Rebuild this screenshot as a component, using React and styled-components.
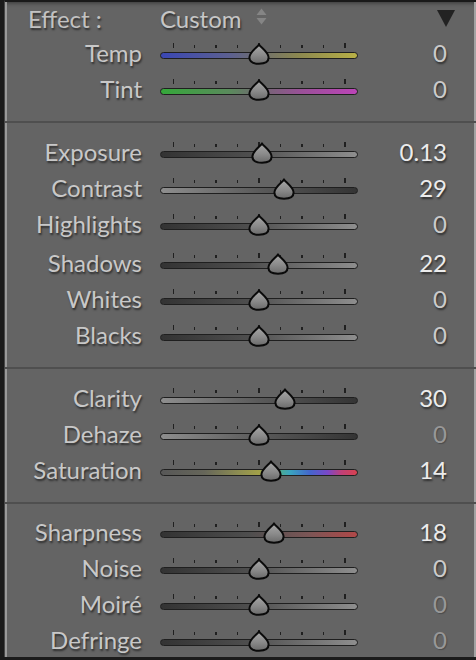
import React from 'react';
import styled, { createGlobalStyle } from 'styled-components';

const GlobalStyle = createGlobalStyle`
  html, body { margin: 0; padding: 0; background: #1b1b1b; }
  body {
    width: 476px; height: 660px; overflow: hidden;
    font-family: Lato, "Open Sans", sans-serif;
  }
`;

const Frame = styled.div`
  width: 476px;
  height: 660px;
  box-sizing: border-box;
  padding-left: 4px;
  padding-bottom: 3px;
  background: #1b1b1b;
  display: flex;
`;

const Panel = styled.div`
  flex: 1;
  box-sizing: border-box;
  overflow: hidden;
  background: #646464;
  border-left: 1px solid #474747;
  border-top: 2px solid #1a1a1a;
  box-shadow: inset 2px 0 0 #9a9a9a, inset -2px 0 0 #a3a3a3,
    inset 0 5px 4px -4px rgba(0, 0, 0, 0.45);
  display: flex;
  flex-direction: column;
`;

const Section = styled.div`
  padding-top: ${(p) => (p.$first ? '0' : '10.5px')};
  padding-bottom: ${(p) => (p.$last ? '0' : '14px')};
  display: flex;
  flex-direction: column;
`;

const Divider = styled.div`
  height: 2px;
  background: #4f4f4f;
  flex: none;
`;

const HeaderRow = styled.div`
  height: 33px;
  display: flex;
  align-items: center;
  flex: none;
`;

const EffectLabel = styled.div`
  width: 155px;
  box-sizing: border-box;
  padding-left: 23px;
  font-size: 24px;
  color: #c2c2c2;
  text-shadow: 1px 2px 2px rgba(0, 0, 0, 0.55);
  white-space: nowrap;
`;

const EffectValue = styled.div`
  font-size: 24px;
  color: #c6c6c6;
  text-shadow: 1px 2px 2px rgba(0, 0, 0, 0.55);
`;

const Stepper = styled.svg`
  margin-left: 14px;
  margin-bottom: 4px;
  flex: none;
`;

const Disclosure = styled.svg`
  margin-left: auto;
  margin-right: 21px;
  flex: none;
`;

const Row = styled.div`
  height: 36px;
  display: flex;
  align-items: stretch;
  flex: none;
  margin-top: ${(p) => p.$extra || 0}px;
`;

const Label = styled.div`
  width: 137px;
  line-height: 36px;
  text-align: right;
  font-size: 24px;
  color: #c8c8c8;
  text-shadow: 1px 2px 2px rgba(0, 0, 0, 0.55);
  white-space: nowrap;
`;

const Slider = styled.div`
  position: relative;
  width: 198px;
  margin-left: 18px;
  box-sizing: border-box;
  padding-top: 8px;
  display: flex;
  flex-direction: column;
  flex: none;
`;

const Ticks = styled.div`
  height: 5px;
  padding: 0 12.5px;
  display: flex;
  justify-content: space-between;
  align-items: flex-end;
`;

const Tick = styled.span`
  width: 1.5px;
  height: ${(p) => (p.$major ? 5 : 3)}px;
  background: #202020;
`;

const Track = styled.div`
  margin-top: 4px;
  height: 7px;
  box-sizing: border-box;
  border: 1.5px solid #1f1f1f;
  border-radius: 4px;
  background: ${(p) => p.$bg};
`;

const ThumbSvg = styled.svg`
  position: absolute;
  top: 8px;
  left: ${(p) => p.$left}px;
`;

const Value = styled.div`
  flex: 1;
  line-height: 36px;
  text-align: right;
  padding-right: 29px;
  font-size: 24px;
  color: ${(p) => (p.$dim ? '#989898' : p.$bright ? '#ececec' : '#cbcbcb')};
  text-shadow: ${(p) =>
    p.$dim ? '1px 1px 1px rgba(0,0,0,0.25)' : '1px 2px 2px rgba(0, 0, 0, 0.55)'};
`;

const DARK_LIGHT = 'linear-gradient(to right, #333 0%, #4e4e4e 45%, #8e8e8e 100%)';
const LIGHT_DARK = 'linear-gradient(to right, #8e8e8e 0%, #5a5a5a 50%, #343434 100%)';
const TEMP = 'linear-gradient(to right, #3a47b4 0%, #5c6090 35%, #6e6e6e 50%, #8c8850 70%, #b8b046 100%)';
const TINT = 'linear-gradient(to right, #35a83a 0%, #5a8a5c 35%, #706870 50%, #9a5098 72%, #bc44b8 100%)';
const SAT =
  'linear-gradient(to right, #575757 0%, #66665a 22%, #8e8e52 40%, #a2a048 50%, #58ae78 58%, #3aa4c0 66%, #4466cc 76%, #7a48c8 85%, #c04078 92%, #d84250 100%)';
const SHARP = 'linear-gradient(to right, #333 0%, #4e4e4e 45%, #7a5656 75%, #b04848 100%)';

const sections = [
  {
    header: true,
    rows: [
      { label: 'Temp', value: '0', frac: 0, bg: TEMP },
      { label: 'Tint', value: '0', frac: 0, bg: TINT },
    ],
  },
  {
    rows: [
      { label: 'Exposure', value: '0.13', frac: 0.13 / 4, bg: DARK_LIGHT, bright: true },
      { label: 'Contrast', value: '29', frac: 0.29, bg: LIGHT_DARK, bright: true },
      { label: 'Highlights', value: '0', frac: 0, bg: DARK_LIGHT },
      { label: 'Shadows', value: '22', frac: 0.22, bg: DARK_LIGHT, bright: true, extra: 3.5 },
      { label: 'Whites', value: '0', frac: 0, bg: DARK_LIGHT },
      { label: 'Blacks', value: '0', frac: 0, bg: DARK_LIGHT },
    ],
  },
  {
    rows: [
      { label: 'Clarity', value: '30', frac: 0.3, bg: LIGHT_DARK, bright: true },
      { label: 'Dehaze', value: '0', frac: 0, bg: LIGHT_DARK, dim: true },
      { label: 'Saturation', value: '14', frac: 0.14, bg: SAT, bright: true },
    ],
  },
  {
    last: true,
    rows: [
      { label: 'Sharpness', value: '18', frac: 0.18, bg: SHARP, bright: true },
      { label: 'Noise', value: '0', frac: 0, bg: DARK_LIGHT },
      { label: 'Moiré', value: '0', frac: 0, bg: DARK_LIGHT, dim: true },
      { label: 'Defringe', value: '0', frac: 0, bg: DARK_LIGHT, dim: true },
    ],
  },
];

const TICKS = [true, false, false, false, true, false, false, false, true];

function Thumb({ frac }) {
  const center = 99 + frac * 86;
  return (
    <ThumbSvg $left={center - 11} width="22" height="22" viewBox="0 0 22 22">
      <defs>
        <linearGradient id="thumbFill" x1="0" y1="0" x2="0" y2="1">
          <stop offset="0" stopColor="#a8a8a8" />
          <stop offset="0.55" stopColor="#8a8a8a" />
          <stop offset="1" stopColor="#6a6a6a" />
        </linearGradient>
      </defs>
      <path
        d="M11 1.4 C12.6 4.2 20.6 8.8 20.6 14.6 C20.6 18.6 17 20.8 11 20.8 C5 20.8 1.4 18.6 1.4 14.6 C1.4 8.8 9.4 4.2 11 1.4 Z"
        fill="url(#thumbFill)"
        stroke="#0a0a0a"
        strokeWidth="2"
        strokeLinejoin="round"
      />
    </ThumbSvg>
  );
}

function SliderRow({ row }) {
  return (
    <Row $extra={row.extra}>
      <Label>{row.label}</Label>
      <Slider>
        <Ticks>
          {TICKS.map((m, i) => (
            <Tick key={i} $major={m} />
          ))}
        </Ticks>
        <Track $bg={row.bg} />
        <Thumb frac={row.frac} />
      </Slider>
      <Value $bright={row.bright} $dim={row.dim}>
        {row.value}
      </Value>
    </Row>
  );
}

export default function App() {
  return (
    <>
      <GlobalStyle />
      <Frame>
        <Panel>
          {sections.map((s, si) => (
            <React.Fragment key={si}>
              {si > 0 && <Divider />}
              <Section $first={si === 0} $last={s.last}>
                {s.header && (
                  <HeaderRow>
                    <EffectLabel>Effect :</EffectLabel>
                    <EffectValue>Custom</EffectValue>
                    <Stepper width="11" height="17" viewBox="0 0 11 17">
                      <path d="M5.5 0.5 L10.5 7 L0.5 7 Z" fill="#858585" />
                      <path d="M0.5 10 L10.5 10 L5.5 16.5 Z" fill="#858585" />
                    </Stepper>
                    <Disclosure width="18" height="17" viewBox="0 0 18 17">
                      <path d="M0 0 L18 0 L9 17 Z" fill="#222" />
                    </Disclosure>
                  </HeaderRow>
                )}
                {s.rows.map((r) => (
                  <SliderRow key={r.label} row={r} />
                ))}
              </Section>
            </React.Fragment>
          ))}
        </Panel>
      </Frame>
    </>
  );
}
